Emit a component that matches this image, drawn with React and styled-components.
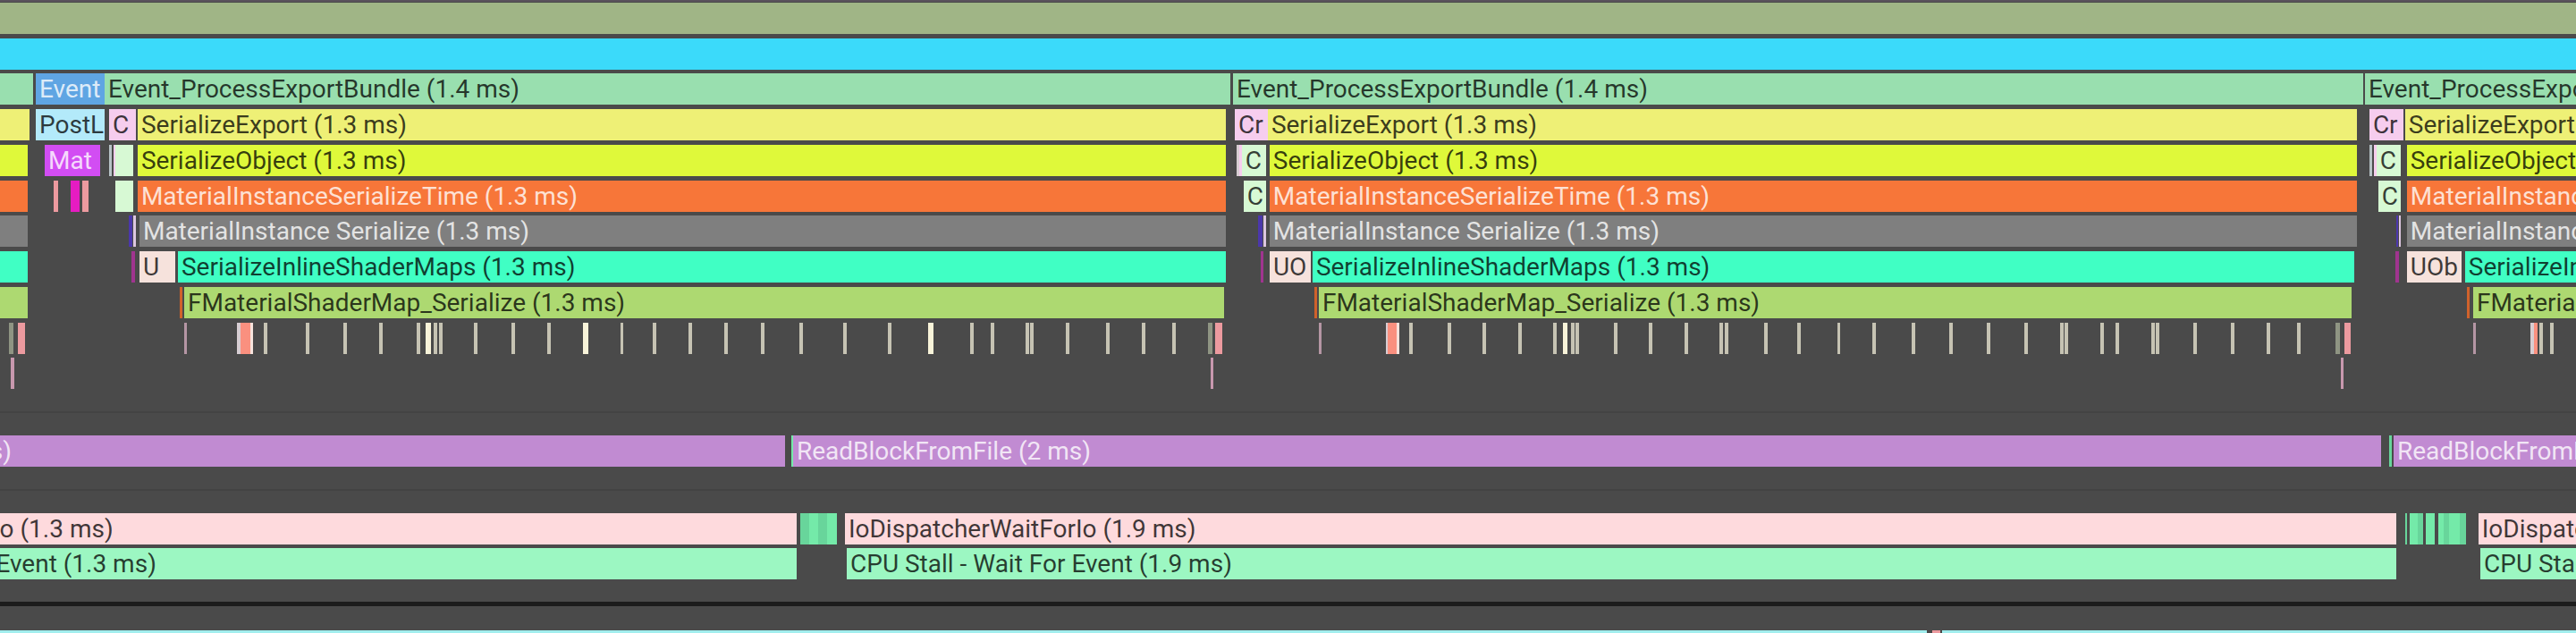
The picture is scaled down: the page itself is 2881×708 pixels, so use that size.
import React, { Component } from "react";
import styled, { createGlobalStyle, css } from "styled-components";

// Length of the visible time range, in timeline units.
const RANGE = 2881;

const colors = {
  sage: "#a0b586",
  sky: "#3bdafa",
  mint: "#99dfaf",
  blue: "#5fa5e3",
  sand: "#eef076",
  ice: "#b3eafa",
  blush: "#f6cdee",
  lime: "#dff93a",
  violet: "#d24df3",
  steel: "#b8c3c7",
  pale: "#d7f9d4",
  orange: "#f77639",
  salmon: "#ec9a9f",
  magenta: "#e61cc2",
  gray: "#7f7f7f",
  indigo: "#4b37ab",
  lilac: "#dcc6e0",
  teal: "#40ffc4",
  plum: "#a0348f",
  shell: "#f6e2dc",
  leaf: "#add971",
  rust: "#d0622b",
  tick: "#c6c3b3",
  bright: "#f8f3d9",
  moss: "#8f9583",
  mauve: "#b596a4",
  fog: "#d7cdd2",
  coral: "#fa907f",
  rose: "#c898ae",
  purple: "#c18bd2",
  pink: "#fedadd",
  aqua: "#9cf7c2",
  fern: "#68d59b",
  spring: "#74eaa9",
  cyan: "#a2eeee",
};

// Every event is [start, end, color, label, light label].
const bundle = "Event_ProcessExportBundle (1.4 ms)";
const serializeExport = "SerializeExport (1.3 ms)";
const serializeObject = "SerializeObject (1.3 ms)";
const serializeTime = "MaterialInstanceSerializeTime (1.3 ms)";
const instance = "MaterialInstance Serialize (1.3 ms)";
const shaderMaps = "SerializeInlineShaderMaps (1.3 ms)";
const shaderMap = "FMaterialShaderMap_Serialize (1.3 ms)";

const ticks = (...starts) => starts.map(start => [start, start + 4, "tick"]);

const loaderLanes = [
  [[0, 2881, "sage"]],
  [[0, 2881, "sky"]],
  [
    [0, 37, "mint"],
    [40, 117, "blue", "Event", true],
    [117, 1376, "mint", bundle],
    [1379, 2643, "mint", bundle],
    [2645, 2881, "mint", bundle],
  ],
  [
    [0, 33, "sand"],
    [40, 117, "ice", "PostL"],
    [122, 152, "blush", "C"],
    [154, 1371, "sand", serializeExport],
    [1381, 1418, "blush", "Cr"],
    [1418, 2636, "sand", serializeExport],
    [2650, 2688, "blush", "Cr"],
    [2690, 2881, "sand", serializeExport],
  ],
  [
    [0, 31, "lime"],
    [50, 112, "violet", "Mat", true],
    [122, 125, "steel"],
    [127, 129, "blush"],
    [129, 149, "pale"],
    [154, 1371, "lime", serializeObject],
    [1383, 1386, "fog"],
    [1386, 1389, "blush"],
    [1389, 1416, "pale", "C"],
    [1420, 2636, "lime", serializeObject],
    [2650, 2653, "steel"],
    [2655, 2658, "blush"],
    [2658, 2685, "pale", "C"],
    [2692, 2881, "lime", serializeObject],
  ],
  [
    [0, 31, "orange"],
    [60, 65, "salmon"],
    [79, 89, "magenta"],
    [92, 99, "salmon"],
    [129, 149, "pale"],
    [154, 1371, "orange", serializeTime, true],
    [1391, 1416, "pale", "C"],
    [1420, 2636, "orange", serializeTime, true],
    [2660, 2685, "pale", "C"],
    [2692, 2881, "orange", serializeTime, true],
  ],
  [
    [0, 31, "gray"],
    [144, 148, "indigo"],
    [149, 152, "lilac"],
    [156, 1371, "gray", instance, true],
    [1407, 1412, "indigo"],
    [1413, 1416, "lilac"],
    [1420, 2636, "gray", instance, true],
    [2680, 2682, "indigo"],
    [2683, 2685, "lilac"],
    [2692, 2881, "gray", instance, true],
  ],
  [
    [0, 31, "teal"],
    [147, 151, "plum"],
    [156, 196, "shell", "U"],
    [199, 1371, "teal", shaderMaps],
    [1410, 1413, "plum"],
    [1420, 1466, "shell", "UO"],
    [1468, 2633, "teal", shaderMaps],
    [2679, 2683, "plum"],
    [2692, 2753, "shell", "UOb"],
    [2757, 2881, "teal", shaderMaps],
  ],
  [
    [0, 31, "leaf"],
    [201, 204, "rust"],
    [206, 1369, "leaf", shaderMap],
    [1470, 1473, "rust"],
    [1475, 2630, "leaf", shaderMap],
    [2759, 2762, "rust"],
    [2766, 2881, "leaf", shaderMap],
  ],
  [
    [10, 15, "moss"],
    [20, 28, "salmon"],
    [206, 209, "mauve"],
    [265, 269, "fog"],
    [269, 280, "coral"],
    [280, 283, "shell"],
    ...ticks(295, 342, 384, 424, 466),
    [476, 482, "bright"],
    ...ticks(485, 491, 530, 572, 612),
    [652, 658, "bright"],
    ...ticks(694, 731, 771, 811, 852, 895, 944, 994),
    [1039, 1045, "bright"],
    ...ticks(1086, 1109, 1148, 1153, 1193, 1238, 1278, 1312),
    [1352, 1357, "moss"],
    [1360, 1368, "salmon"],
    [1476, 1479, "mauve"],
    [1551, 1553, "fog"],
    [1553, 1563, "coral"],
    [1563, 1566, "shell"],
    ...ticks(1577, 1620, 1659, 1699, 1738),
    [1749, 1754, "bright"],
    ...ticks(1758, 1763, 1806, 1845, 1885, 1924, 1930, 1974, 2011),
    ...ticks(2056, 2096, 2140, 2182, 2224, 2266, 2306, 2311, 2351),
    ...ticks(2368, 2408, 2413, 2455, 2497, 2537, 2571),
    [2614, 2619, "moss"],
    [2624, 2631, "salmon"],
    [2768, 2771, "mauve"],
    [2832, 2836, "fog"],
    [2836, 2840, "coral"],
    ...ticks(2842, 2854),
  ],
  [
    [12, 16, "rose"],
    [1354, 1357, "rose"],
    [2618, 2621, "rose"],
  ],
];

const readLanes = [
  [
    [-320, 878, "purple", "ReadBlockFromFile (2 ms)", true],
    [885, 887, "spring"],
    [887, 2663, "purple", "ReadBlockFromFile (2 ms)", true],
    [2672, 2675, "fern"],
    [2677, 2881, "purple", "ReadBlockFromFile (2 ms)", true],
  ],
];

const dispatcherLanes = [
  [
    [-266, 891, "pink", "IoDispatcherWaitForIo (1.3 ms)"],
    [895, 905, "fern"],
    [905, 915, "spring"],
    [915, 925, "fern"],
    [925, 936, "spring"],
    [945, 2680, "pink", "IoDispatcherWaitForIo (1.9 ms)"],
    [2690, 2692, "fern"],
    [2695, 2704, "spring"],
    [2704, 2710, "fern"],
    [2713, 2723, "spring"],
    [2727, 2733, "spring"],
    [2733, 2739, "fern"],
    [2739, 2751, "spring"],
    [2751, 2758, "fern"],
    [2772, 2881, "pink", "IoDispatcherWaitForIo (1.9 ms)"],
  ],
  [
    [-256, 891, "aqua", "CPU Stall - Wait For Event (1.3 ms)"],
    [947, 2680, "aqua", "CPU Stall - Wait For Event (1.9 ms)"],
    [2774, 2881, "aqua", "CPU Stall - Wait For Event (1.9 ms)"],
  ],
];

const workerLanes = [
  [
    [0, 2155, "cyan"],
    [2161, 2170, "salmon"],
    [2172, 2881, "cyan"],
  ],
];

const percent = units => `${(units / RANGE) * 100}%`;

class Lane extends Component {
  render() {
    let cursor = 0;

    return (
      <LaneRow>
        {this.props.events.map(([start, end, color, label, light]) => {
          const offset = start - cursor;
          cursor = end;

          return (
            <Bar
              key={start}
              $color={colors[color]}
              $light={light}
              style={{
                marginLeft: percent(offset),
                width: percent(end - start),
              }}
            >
              {label && <Label>{label}</Label>}
            </Bar>
          );
        })}
      </LaneRow>
    );
  }
}

const renderLanes = lanes =>
  lanes.map((events, index) => <Lane key={index} events={events} />);

class App extends Component {
  render() {
    return (
      <Timeline>
        <GlobalStyle />
        <LoaderTrack>{renderLanes(loaderLanes)}</LoaderTrack>
        <Track>{renderLanes(readLanes)}</Track>
        <Track>{renderLanes(dispatcherLanes)}</Track>
        <WorkerTrack>{renderLanes(workerLanes)}</WorkerTrack>
      </Timeline>
    );
  }
}

const GlobalStyle = createGlobalStyle`
  body {
    margin: 0;
    background-color: #4a4a4a;
  }
`;

const trackStyle = css`
  flex: none;
  display: grid;
`;

const Timeline = styled.main`
  display: flex;
  flex-direction: column;
  height: 100vh;
  overflow: hidden;
  background-color: #4a4a4a;
  font-family: Roboto, "Liberation Sans", sans-serif;
  font-size: 28px;
  line-height: 36px;
`;

const LoaderTrack = styled.section`
  ${trackStyle}
  grid-template-rows: repeat(11, 1fr);
  height: 437px;
  padding-top: 1px;
  padding-bottom: 20px;
  border-top: 2px solid #5a525c;
`;

const Track = styled.section`
  ${trackStyle}
  row-gap: 4px;
  padding: 25px 0;
  border-top: 2px solid #434343;
`;

const WorkerTrack = styled.section`
  ${trackStyle}
  padding-top: 27px;
  border-top: 5px solid #1c1c1c;
`;

const LaneRow = styled.div`
  display: flex;
  min-width: 0;
  overflow: hidden;
`;

const Bar = styled.div`
  flex: none;
  height: 35px;
  overflow: hidden;
  background-color: ${props => props.$color};
  color: ${props =>
    props.$light ? "rgba(255, 255, 255, 0.8)" : "rgba(0, 0, 0, 0.76)"};
`;

const Label = styled.span`
  display: block;
  padding-left: 4px;
  white-space: nowrap;
`;

export default App;
